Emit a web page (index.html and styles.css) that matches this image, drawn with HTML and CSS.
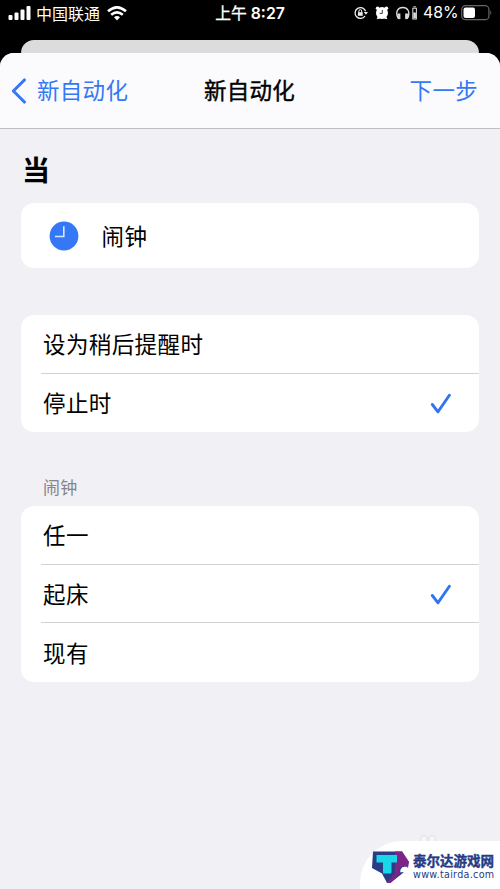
FILE: index.html
```html
<!DOCTYPE html>
<html lang="zh-CN">
<head>
<meta charset="utf-8">
<title>新自动化</title>
<link rel="stylesheet" href="styles.css">
</head>
<body>
<div class="screen">
  <div class="status">
    <svg class="signal" width="23" height="15" viewBox="0 0 23 15" fill="#fff"><rect x="0.5" y="9" width="4" height="5" rx="1"/><rect x="6.5" y="6.5" width="4" height="7.5" rx="1"/><rect x="12.5" y="3.5" width="4" height="10.5" rx="1"/><rect x="18.5" y="0" width="4" height="14" rx="1"/></svg>
    <span class="carrier">中国联通</span>
    <svg class="wifi" width="20" height="15" viewBox="0 0 20 15" fill="none" stroke="#fff" stroke-width="2.6"><path d="M1 5.3Q10 -2.6 19 5.3"/><path d="M4.2 8.8Q10 3.9 15.8 8.8"/><path d="M7 11.2Q10 8.9 13 11.2L10 14.5Z" fill="#fff" stroke="none"/></svg>
    <span class="time"><span class="ampm">上午</span> 8:27</span>
    <div class="indicators">
      <svg width="14" height="14" viewBox="0 0 14 14" fill="none" stroke="#eee" stroke-width="1.3"><path d="M11 10A5.4 5.4 0 1 1 11.6 5.3"/><path d="M9.8 6h4.2l-2.1 2.8z" fill="#eee" stroke="none"/><rect x="3.9" y="6.2" width="4.8" height="3.6" fill="#eee" stroke="none"/><path d="M4.9 6.5V5a1.4 1.4 0 0 1 2.8 0v1.5" stroke-width="1"/></svg>
      <svg class="alarm" width="14" height="14" viewBox="0 0 14 14"><g fill="#fff"><circle cx="7" cy="7" r="6"/><circle cx="2.6" cy="2.3" r="1.8"/><circle cx="11.4" cy="2.3" r="1.8"/><path d="M1.6 13.3l1.4-3.3 3 2.3zM12.4 13.3l-1.4-3.3-3 2.3z"/></g><path d="M7.3 4v3.4H4.6" fill="none" stroke="#222" stroke-width=".9"/></svg>
      <svg class="phones" width="23" height="14" viewBox="0 0 23 14" fill="none" stroke="#ddd"><path d="M2 12C-1.2 5.4 2.3 1.5 6.8 1.5S14.6 5.4 11.8 12" stroke-width="1.4"/><rect x="2.2" y="8" width="1.7" height="4.6" fill="#ddd"/><rect x="9.7" y="8" width="1.7" height="4.6" fill="#ddd"/><rect x="16.8" y="2.2" width="3.6" height="10.8"/><path d="M17.4 .8h2.4"/><path d="M18.6 6.5v5.8" stroke-width="2.6"/></svg>
      <span class="percent">48%</span>
      <svg class="battery" width="31" height="16" viewBox="0 0 31 16"><rect x=".7" y=".7" width="27.2" height="14" rx="3.8" fill="none" stroke="#666" stroke-width="1.2"/><rect x="2.5" y="2.5" width="11.5" height="10.4" rx="2" fill="#fff"/><path d="M29.3 5.3q2 2.4 0 4.8z" fill="#666"/></svg>
    </div>
  </div>
  <div class="back-sheet"></div>
  <main class="sheet">
    <header class="nav">
      <a class="back"><svg width="16" height="26" viewBox="0 0 16 26" fill="none" stroke="#3478f6" stroke-width="3.1" stroke-linecap="round" stroke-linejoin="round"><path d="M13.4 2L2.4 13l11 11"/></svg><span>新自动化</span></a>
      <h1>新自动化</h1>
      <a class="next">下一步</a>
    </header>
    <h2>当</h2>
    <section class="card trigger">
      <svg width="30" height="30" viewBox="0 0 30 30"><circle cx="15" cy="15" r="14.4" fill="#3478f6"/><path d="M14.8 5.2v10.3H6" fill="none" stroke="#d6e8ff" stroke-width="1.6"/></svg>
      <span>闹钟</span>
    </section>
    <section class="card modes">
      <div class="row">设为稍后提醒时</div>
      <div class="row">停止时<svg class="check" width="22" height="22" viewBox="0 0 22 22"><path d="M2.3 11.5l5.7 7.3L19.4 2.3"/></svg></div>
    </section>
    <h3>闹钟</h3>
    <section class="card alarms">
      <div class="row">任一</div>
      <div class="row">起床<svg class="check" width="22" height="22" viewBox="0 0 22 22"><path d="M2.3 11.5l5.7 7.3L19.4 2.3"/></svg></div>
      <div class="row">现有</div>
    </section>
  </main>
  <svg class="paw" width="20" height="12" viewBox="0 0 20 12" fill="#f6f6f8" stroke="#dfdfe3"><ellipse cx="6" cy="6" rx="3.2" ry="4.5"/><ellipse cx="14" cy="6" rx="3.2" ry="4.5"/></svg>
  <div class="watermark">
    <svg width="40" height="35" viewBox="0 0 40 35"><path d="M2 1.5H31l7 10.5-2.5 4.5-4.5 1v3l1.5 2L20 32.5l-4 .5L11 23.5 1 18Z" fill="#283d86"/><path d="M24 1.5h7L38 12l-1 6A4.8 4.8 0 0 0 29 23.2L19.5 33l-3.8-.5 8-9z" fill="#7d2586"/><path d="M29.5 22.5a4.4 4.4 0 0 1 7.3-4.4l-2.3 3.5z" fill="#fff"/><path d="M5.5 5H26v7.5h-5.5V22q0 1.5-1.5 1.5h-7V12.5H5.5Z" fill="#18d7e8"/></svg>
    <div class="brand"><span class="brand-name">泰尔达游戏网</span><span class="brand-url">www.tairda.com</span></div>
  </div>
</div>
</body>
</html>
```
FILE: styles.css
```css
* { box-sizing: border-box; }
body { margin: 0; background: #000; font-family: "Liberation Sans", "Noto Sans CJK SC", sans-serif; color: #000; }
.screen { position: relative; width: 500px; height: 889px; overflow: hidden; background: #000; display: flex; flex-direction: column; }
.status { height: 40px; flex: none; display: flex; align-items: flex-start; padding: 6px 8px 0; color: #fff; font-family: Inter, "Noto Sans CJK SC", sans-serif; position: relative; }
.status svg { flex: none; }
.carrier { font-size: 16px; line-height: 16px; margin-left: 5px; white-space: nowrap; }
.wifi { margin-left: 7px; }
.time { position: absolute; left: 0; right: 0; top: 6px; text-align: center; font-size: 15.8px; line-height: 16px; font-weight: 600; }
.ampm { font-weight: 400; -webkit-text-stroke: .3px #fff; }
.indicators { margin-left: auto; display: flex; align-items: center; height: 14px; }
.alarm { margin-left: 7px; }
.phones { margin-left: 7px; }
.percent { font-size: 15.8px; line-height: 16px; margin-left: 4px; width: 35px; white-space: nowrap; }
.battery { margin-left: 3px; }
.back-sheet { height: 24px; flex: none; margin: 0 21px; background: #dcdcdc; border-radius: 13px 13px 0 0; }
.sheet { flex: 1; margin-top: -11px; background: #f0f0f5; border-radius: 14px 14px 0 0; overflow: hidden; }
.nav { height: 76px; background: #fbfbfd; border-bottom: 1px solid #bfbfc6; display: grid; grid-template-columns: 1fr auto 1fr; align-items: center; padding: 0 22px 0 11px; font-size: 22.5px; line-height: 32px; letter-spacing: .3px; }
.back, .next { color: #3478f6; }
.back { display: flex; align-items: center; gap: 10px; }
.back span, .next, .nav h1 { padding-top: 3px; }
.next { text-align: right; }
.nav h1 { margin: 0 -5px 0 5px; font-size: 22.5px; font-weight: 400; -webkit-text-stroke: .4px #000; }
h2 { margin: 23px 0 11px 22px; font-size: 28px; line-height: 40px; font-weight: 700; }
.card { margin: 0 21px; background: #fff; border-radius: 13px; overflow: hidden; font-size: 22.5px; letter-spacing: .4px; }
.trigger { height: 65px; display: flex; align-items: center; padding-left: 27.5px; gap: 23px; }
.trigger span { padding-bottom: 2px; }
.modes { margin-top: 47px; height: 117px; }
.row { height: 58.6px; margin-left: 20px; padding: 0 27px 1px 2px; display: flex; align-items: center; justify-content: space-between; border-bottom: 1px solid #d2d2d5; }
.row:last-child { border-bottom: 0; }
.check { position: relative; top: 2px; fill: none; stroke: #2f75ef; stroke-width: 2.9; stroke-linecap: round; stroke-linejoin: round; }
h3 { margin: 44px 0 4px 43px; font-size: 17px; line-height: 26px; font-weight: 400; color: #85858a; letter-spacing: .3px; }
.alarms { height: 176px; }
.paw { position: absolute; left: 418px; top: 834px; }
.watermark { position: absolute; right: 0; bottom: 0; width: 140px; height: 48px; background: #fff; border-radius: 42px 0 0 0; display: flex; align-items: center; padding: 4px 0 0 11px; }
.brand { display: flex; flex-direction: column; margin-left: 2px; color: #273b83; }
.brand-name { font-size: 13.5px; line-height: 16px; font-weight: 700; white-space: nowrap; -webkit-text-stroke: .4px #273b83; }
.brand-url { font-family: "DejaVu Sans", sans-serif; font-size: 9.6px; line-height: 10px; letter-spacing: .3px; }
```
